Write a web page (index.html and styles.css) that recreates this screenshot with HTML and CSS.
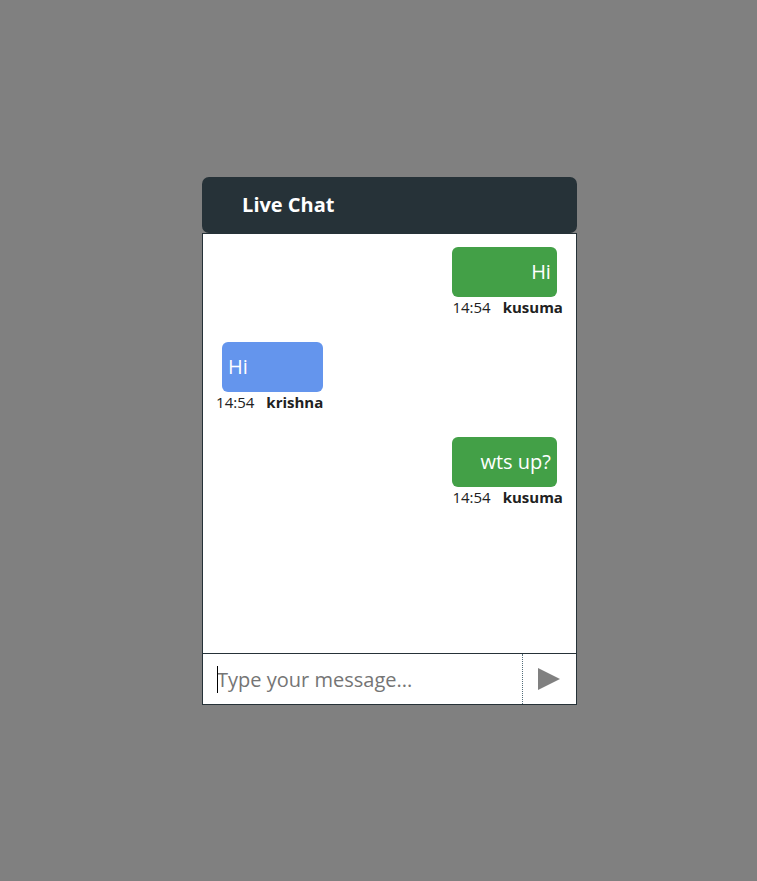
FILE: index.html
```html
<!DOCTYPE html>
<html lang="en">
<head>
<meta charset="utf-8">
<title>Live Chat</title>
<link rel="stylesheet" href="styles.css">
</head>
<body>
<main class="chat">
  <header class="chat-header"><h1>Live Chat</h1></header>
  <section class="messages" aria-label="Messages">
    <article class="message sent">
      <p class="bubble">Hi</p>
      <p class="meta"><time>14:54</time><strong>kusuma</strong></p>
    </article>
    <article class="message received">
      <p class="bubble">Hi</p>
      <p class="meta"><time>14:54</time><strong>krishna</strong></p>
    </article>
    <article class="message sent">
      <p class="bubble">wts up?</p>
      <p class="meta"><time>14:54</time><strong>kusuma</strong></p>
    </article>
  </section>
  <form class="composer">
    <label class="entry"><input class="field" type="text" placeholder="Type your message..." aria-label="Message"></label>
    <button class="send" type="button" aria-label="Send"><svg width="22" height="22" viewBox="0 0 22 22" aria-hidden="true"><path d="M0 0L22 11L0 22Z" fill="#808080"/></svg></button>
  </form>
</main>
</body>
</html>
```

FILE: styles.css
```css
* { box-sizing: border-box; }

body {
  margin: 0;
  min-height: 100vh;
  display: grid;
  place-items: center;
  padding-left: 22px;
  background: #808080;
  color: #212121;
  font-family: "Open Sans", sans-serif;
}

h1, p { margin: 0; }

.chat { width: 51%; min-width: 300px; max-width: 375px; }

.chat-header {
  padding: 14px 40px;
  border-radius: 7px;
  background: #263238;
  color: #fff;
}

.chat-header h1 { font-size: 20px; line-height: 28px; }

.messages {
  display: flex;
  flex-direction: column;
  gap: 24px;
  min-height: 421px;
  padding: 13px;
  border: 1px solid #263238;
  background: #fff;
}

.message { display: flex; flex-direction: column; }
.sent { align-self: flex-end; }
.received { align-self: flex-start; }

.bubble {
  padding: 11px 6px;
  border-radius: 6px;
  color: #fff;
  font-size: 20px;
  line-height: 28px;
}

.sent .bubble {
  margin-right: 6px;
  background: #43a047;
  text-align: right;
}

.received .bubble {
  margin-left: 6px;
  background: #6495ed;
}

.meta {
  display: flex;
  gap: 12px;
  font-size: 15px;
  line-height: 21px;
}

.composer {
  display: flex;
  height: 51px;
  border: 1px solid #263238;
  border-top: 0;
  background: #fff;
}

.entry {
  position: relative;
  display: flex;
  flex: 1;
  min-width: 0;
}

.entry::before {
  content: "";
  position: absolute;
  top: 12px;
  left: 14px;
  width: 1px;
  height: 27px;
  background: #000;
}

.field {
  flex: 1;
  min-width: 0;
  padding: 2px 14px 0;
  border: 0;
  outline: 0;
  background: none;
  caret-color: transparent;
  font: 20px "Open Sans", sans-serif;
}

.field::placeholder { color: #757575; }

.send {
  display: grid;
  place-items: center;
  width: 54px;
  padding: 0;
  border: 0;
  border-left: 1px dotted #546e7a;
  background: none;
}
```
